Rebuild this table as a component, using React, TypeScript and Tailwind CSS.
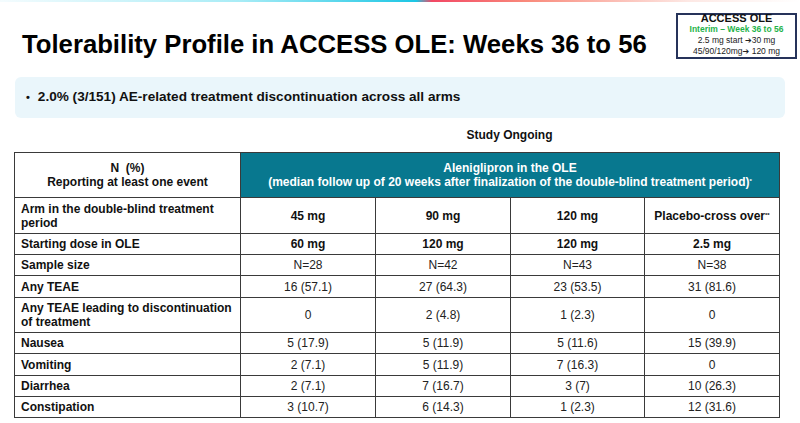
import React from "react";

const rows: { label: string; vals: string[]; bold?: boolean; h: string }[] = [
  { label: "Arm in the double-blind treatment period", vals: ["45 mg", "90 mg", "120 mg", "Placebo-cross over"], bold: true, h: "h-[36px]" },
  { label: "Starting dose in OLE", vals: ["60 mg", "120 mg", "120 mg", "2.5 mg"], bold: true, h: "h-[21px]" },
  { label: "Sample size", vals: ["N=28", "N=42", "N=43", "N=38"], h: "h-[21px]" },
  { label: "Any TEAE", vals: ["16 (57.1)", "27 (64.3)", "23 (53.5)", "31 (81.6)"], h: "h-[22px]" },
  { label: "Any TEAE leading to discontinuation of treatment", vals: ["0", "2 (4.8)", "1 (2.3)", "0"], h: "h-[35px]" },
  { label: "Nausea", vals: ["5 (17.9)", "5 (11.9)", "5 (11.6)", "15 (39.9)"], h: "h-[21px]" },
  { label: "Vomiting", vals: ["2 (7.1)", "5 (11.9)", "7 (16.3)", "0"], h: "h-[22px]" },
  { label: "Diarrhea", vals: ["2 (7.1)", "7 (16.7)", "3 (7)", "10 (26.3)"], h: "h-[21px]" },
  { label: "Constipation", vals: ["3 (10.7)", "6 (14.3)", "1 (2.3)", "12 (31.6)"], h: "h-[21px]" },
];

export default function App() {
  return (
    <div className="w-[800px] h-[423px] bg-white overflow-hidden text-[#111] font-['Liberation_Sans',Arial,sans-serif]">
      <div className="h-[2px] bg-[linear-gradient(to_right,#f4fcfe,#a8ecf6_30%,#1cc6e4_52%,#f24864_54%,#f98b7c_66%,#fde8e4_86%,#ffffff)]" />

      <div className="flex justify-between items-start h-[75px]">
        <h1 className="pl-[22px] pt-[27px] text-[25.7px] leading-[30px] font-bold text-black">
          Tolerability Profile in ACCESS OLE: Weeks 36 to 56
        </h1>
        <div className="mt-[11px] mr-[3px] w-[121px] h-[46px] border-2 border-[#26335a] bg-white flex flex-col items-center justify-center pb-[2px] leading-[10.5px]">
          <div className="text-[11px] leading-[12px] font-bold">ACCESS OLE</div>
          <div className="text-[8.5px] font-bold text-[#1fb34a]">Interim – Week 36 to 56</div>
          <div className="text-[8.5px] text-[#222]">
            2.5 mg start <span className="font-['DejaVu_Sans',sans-serif] text-[8px]">➔</span>30 mg
          </div>
          <div className="text-[8.5px] text-[#222]">
            45/90/120mg<span className="font-['DejaVu_Sans',sans-serif] text-[8px]">➔</span> 120 mg
          </div>
        </div>
      </div>

      <div className="mx-[15px] h-[41px] rounded-md bg-[#eaf6fb] flex items-center pl-[11px] gap-[8px] text-[13.6px] font-bold">
        <span className="text-[11px]">•</span>
        <span>2.0% (3/151) AE-related treatment discontinuation across all arms</span>
      </div>

      <div className="flex h-[34px] items-center pl-[240px] w-[779px]">
        <div className="flex-1 text-center text-[12px] font-bold">Study Ongoing</div>
      </div>

      <table className="ml-[14px] w-[765px] border-collapse table-fixed text-[12px] leading-[14px]">
        <colgroup>
          <col className="w-[226px]" />
          <col className="w-[135px]" />
          <col className="w-[135px]" />
          <col className="w-[134px]" />
          <col className="w-[135px]" />
        </colgroup>
        <thead>
          <tr className="h-[45px]">
            <th className="border-[1.5px] border-[#3a3a3a] font-bold text-center align-middle">
              <div>N&nbsp;&nbsp;(%)</div>
              <div>Reporting at least one event</div>
            </th>
            <th colSpan={4} className="border-[1.5px] border-[#3a3a3a] bg-[#08788f] text-white font-bold text-center align-middle">
              <div>Aleniglipron in the OLE</div>
              <div>
                (median follow up of 20 weeks after finalization of the double-blind treatment period)
                <sup className="text-[6px]">*</sup>
              </div>
            </th>
          </tr>
        </thead>
        <tbody>
          {rows.map((r) => (
            <tr key={r.label} className={r.h}>
              <td className="border-[1.5px] border-[#3a3a3a] px-[6px] font-bold align-middle">{r.label}</td>
              {r.vals.map((v, i) => (
                <td
                  key={i}
                  className={`border-[1.5px] border-[#3a3a3a] text-center align-middle ${r.bold ? "font-bold" : "text-[#222]"}`}
                >
                  {v}
                  {v === "Placebo-cross over" && <sup className="text-[6px]">**</sup>}
                </td>
              ))}
            </tr>
          ))}
        </tbody>
      </table>
    </div>
  );
}
